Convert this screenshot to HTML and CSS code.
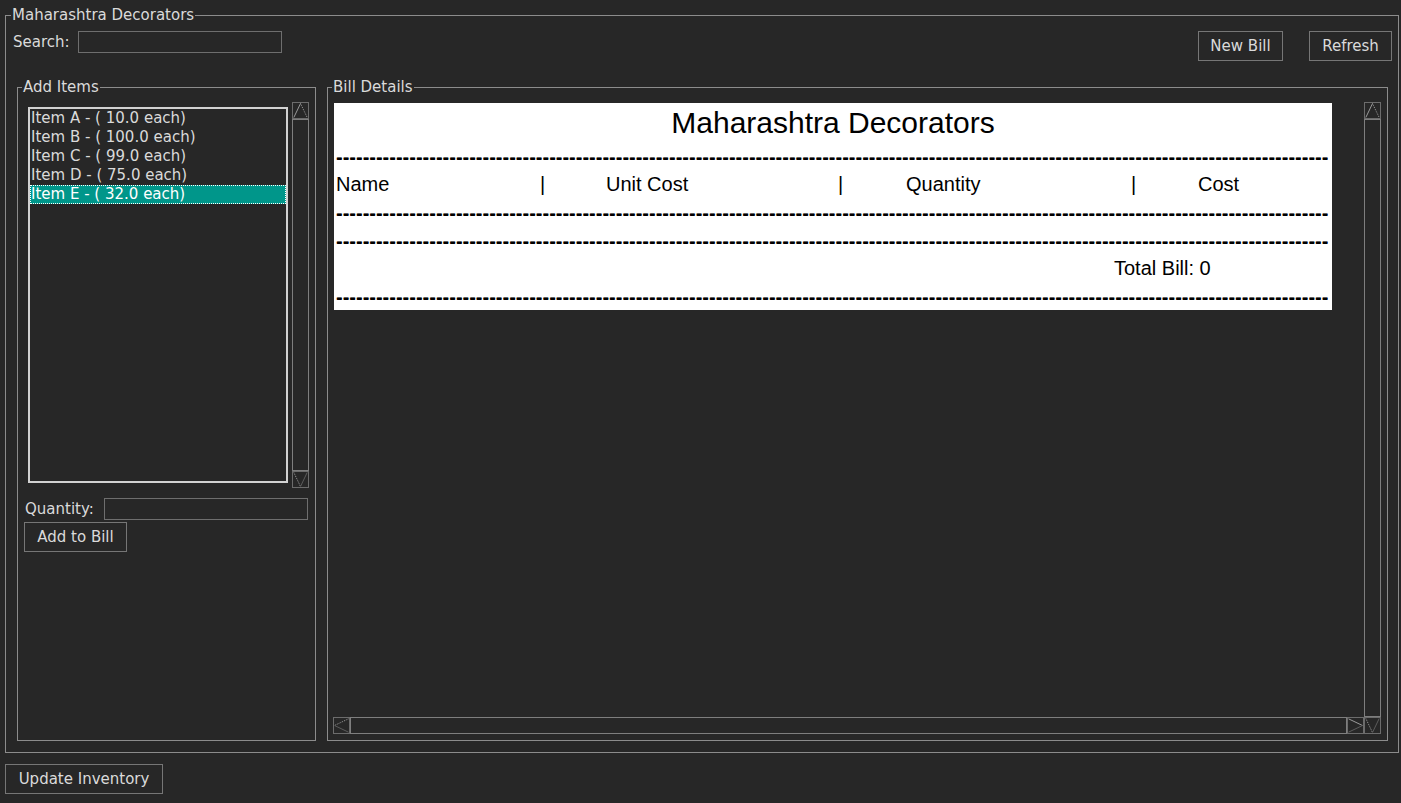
FILE: index.html
```html
<!DOCTYPE html>
<html>
<head>
<meta charset="utf-8">
<title>Maharashtra Decorators</title>
<link rel="stylesheet" href="styles.css">
</head>
<body>
<fieldset class="main">
  <legend class="title">Maharashtra Decorators</legend>
  <div class="toolbar">
    <div class="search">
      <span class="lbl">Search:</span>
      <div class="entry search-entry"></div>
    </div>
    <div class="actions">
      <button class="btn btn-new">New Bill</button>
      <button class="btn btn-refresh">Refresh</button>
    </div>
  </div>
  <div class="panes">
    <fieldset class="pane items">
      <legend class="title pane-title">Add Items</legend>
      <div class="list-row">
        <div class="listbox">
          <div class="item">Item A - ( 10.0 each)</div>
          <div class="item">Item B - ( 100.0 each)</div>
          <div class="item">Item C - ( 99.0 each)</div>
          <div class="item">Item D - ( 75.0 each)</div>
          <div class="item selected">Item E - ( 32.0 each)</div>
        </div>
        <div class="vscroll list-scroll">
          <svg class="arrow" width="17" height="17" viewBox="0 0 17 17"><rect x=".5" y=".5" width="16" height="16" fill="none" stroke="#6c6c6c"/><path d="M8.5 1.5 L1.8 15.5" stroke="#9a9a9a" fill="none"/><path d="M8.5 1.5 L15.2 15.5" stroke="#9a9a9a" stroke-dasharray="1 1" fill="none"/></svg>
          <div class="thumb"></div>
          <svg class="arrow" width="17" height="17" viewBox="0 0 17 17"><rect x=".5" y=".5" width="16" height="16" fill="none" stroke="#6c6c6c"/><path d="M1.8 1.5 L8.5 15.5" stroke="#9a9a9a" stroke-dasharray="1 1" fill="none"/><path d="M15.2 1.5 L8.5 15.5" stroke="#5c5c5c" fill="none"/></svg>
        </div>
      </div>
      <div class="qty-row">
        <span class="lbl">Quantity:</span>
        <div class="entry qty-entry"></div>
      </div>
      <button class="btn btn-add">Add to Bill</button>
    </fieldset>
    <fieldset class="pane bill">
      <legend class="title pane-title">Bill Details</legend>
      <div class="bill-view">
        <div class="bill-main">
          <div class="canvas">
            <div class="receipt">
              <div class="r-title">Maharashtra Decorators</div>
              <div class="r-line dash d1">-----------------------------------------------------------------------------------------------------------------------------------------------------</div>
              <div class="r-line r-head">
                <span class="c c1">Name</span><span class="c c2">|</span><span class="c c3">Unit Cost</span><span class="c c4">|</span><span class="c c5">Quantity</span><span class="c c6">|</span><span class="c">Cost</span>
              </div>
              <div class="r-line dash d2">-----------------------------------------------------------------------------------------------------------------------------------------------------</div>
              <div class="r-line dash d3">-----------------------------------------------------------------------------------------------------------------------------------------------------</div>
              <div class="r-line r-total">Total Bill: 0</div>
              <div class="r-line dash d4">-----------------------------------------------------------------------------------------------------------------------------------------------------</div>
            </div>
          </div>
          <div class="hscroll">
            <svg class="arrow" width="17" height="17" viewBox="0 0 17 17"><rect x=".5" y=".5" width="16" height="16" fill="none" stroke="#6c6c6c"/><path d="M15.5 1.8 L1.5 8.5" stroke="#9a9a9a" stroke-dasharray="1 1" fill="none"/><path d="M1.5 8.5 L15.5 15.2" stroke="#5c5c5c" fill="none"/></svg>
            <div class="thumb"></div>
            <svg class="arrow" width="17" height="17" viewBox="0 0 17 17"><rect x=".5" y=".5" width="16" height="16" fill="none" stroke="#6c6c6c"/><path d="M1.5 1.8 L15.5 8.5" stroke="#9a9a9a" fill="none"/><path d="M15.5 8.5 L1.5 15.2" stroke="#5c5c5c" fill="none"/></svg>
          </div>
        </div>
        <div class="vscroll bill-scroll">
          <svg class="arrow" width="17" height="17" viewBox="0 0 17 17"><rect x=".5" y=".5" width="16" height="16" fill="none" stroke="#6c6c6c"/><path d="M8.5 1.5 L1.8 15.5" stroke="#9a9a9a" fill="none"/><path d="M8.5 1.5 L15.2 15.5" stroke="#9a9a9a" stroke-dasharray="1 1" fill="none"/></svg>
          <div class="thumb"></div>
          <svg class="arrow" width="17" height="17" viewBox="0 0 17 17"><rect x=".5" y=".5" width="16" height="16" fill="none" stroke="#6c6c6c"/><path d="M1.8 1.5 L8.5 15.5" stroke="#9a9a9a" stroke-dasharray="1 1" fill="none"/><path d="M15.2 1.5 L8.5 15.5" stroke="#5c5c5c" fill="none"/></svg>
        </div>
      </div>
    </fieldset>
  </div>
</fieldset>
<button class="btn btn-update">Update Inventory</button>
</body>
</html>
```
FILE: styles.css
```css
html, body {
  margin: 0;
  padding: 0;
}
body {
  background: #272727;
  color: #dadada;
  font-family: "DejaVu Sans", sans-serif;
  font-size: 15px;
  width: 1401px;
  height: 803px;
  overflow: hidden;
}
fieldset {
  margin: 0;
  padding: 0;
  min-inline-size: 0;
  box-sizing: border-box;
  border: 1px solid #8c8c8c;
}
.title {
  padding: 0 1px;
  margin-left: 5px;
  line-height: 17px;
  height: 17px;
}
.pane-title {
  margin-left: 4px;
}
.main {
  margin: 7px 2px 0 5px;
  height: 746px;
  padding: 7px 0 11px 0;
}
.toolbar {
  display: flex;
  justify-content: space-between;
  align-items: flex-start;
  height: 30px;
  margin: 0 6px 0 7px;
}
.search {
  display: flex;
  align-items: center;
  height: 22px;
}
.lbl {
  line-height: 17px;
  white-space: nowrap;
}
.entry {
  box-sizing: border-box;
  height: 22px;
  border: 1px solid #6e6e6e;
  background: #272727;
}
.search-entry {
  width: 204px;
  margin-left: 8px;
}
.actions {
  display: flex;
  gap: 26px;
}
.btn {
  display: block;
  box-sizing: border-box;
  height: 30px;
  padding: 0;
  margin: 0;
  background: #272727;
  color: #dadada;
  border: 1px solid #767676;
  font-family: "DejaVu Sans", sans-serif;
  font-size: 15px;
  line-height: 28px;
  text-align: center;
  white-space: nowrap;
}
.btn-new { width: 85px; }
.btn-refresh { width: 83px; }
.btn-add {
  width: 103px;
  margin: 2px 0 0 6px;
}
.btn-update {
  width: 158px;
  margin: 11px 0 0 5px;
}
.panes {
  display: flex;
  gap: 11px;
  height: 662px;
  margin: 18px 10px 0 11px;
}
.items {
  width: 299px;
  height: 662px;
}
.bill {
  width: 1061px;
  height: 662px;
}
.list-row {
  display: flex;
  align-items: flex-start;
  margin: 6px 0 0 10px;
}
.listbox {
  box-sizing: border-box;
  width: 260px;
  height: 376px;
  margin-top: 5px;
  border: 2px solid #d2d2d2;
}
.item {
  height: 19px;
  line-height: 19px;
  padding-left: 1px;
  white-space: nowrap;
}
.item.selected {
  background: #00968a;
  color: #ffffff;
  outline: 1px dotted #ffffff;
  outline-offset: -1px;
}
.vscroll {
  display: flex;
  flex-direction: column;
  width: 17px;
}
.vscroll .thumb {
  flex: 1;
  border: 1px solid #7e7e7e;
}
.hscroll {
  display: flex;
  height: 17px;
}
.hscroll .thumb {
  flex: 1;
  border: 1px solid #7e7e7e;
}
.arrow {
  display: block;
  flex: none;
}
.list-scroll {
  height: 386px;
  margin-left: 4px;
}
.qty-row {
  display: flex;
  align-items: center;
  height: 22px;
  margin: 10px 0 0 7px;
}
.qty-entry {
  width: 204px;
  margin-left: 10px;
}
.bill-view {
  display: flex;
  margin: 6px 0 0 5px;
  width: 1048px;
  height: 632px;
}
.bill-main {
  display: flex;
  flex-direction: column;
  width: 1031px;
}
.canvas {
  flex: 1;
  background: #272727;
}
.bill-scroll {
  height: 632px;
}
.receipt {
  width: 998px;
  height: 207px;
  margin: 1px 0 0 1px;
  background: #ffffff;
  color: #000000;
  font-family: "Liberation Sans", Arial, sans-serif;
  font-size: 20px;
  overflow: hidden;
}
.r-title {
  font-size: 30px;
  line-height: 36px;
  height: 36px;
  padding-top: 2px;
  text-align: center;
}
.r-line {
  height: 24px;
  line-height: 24px;
  white-space: nowrap;
  padding-left: 2px;
}
.dash {
  overflow: hidden;
  text-shadow: 0 0.7px 0 #000000;
}
.d1 { margin-top: 4px; }
.r-head { margin-top: 3px; display: flex; }
.d2 { margin-top: 5px; }
.d3 { margin-top: 4px; }
.r-total { margin-top: 3px; padding-left: 780px; }
.d4 { margin-top: 5px; }
.c { display: block; flex: none; }
.c1 { width: 204px; }
.c2 { width: 66px; }
.c3 { width: 232px; }
.c4 { width: 68px; }
.c5 { width: 225px; }
.c6 { width: 67px; }
```
